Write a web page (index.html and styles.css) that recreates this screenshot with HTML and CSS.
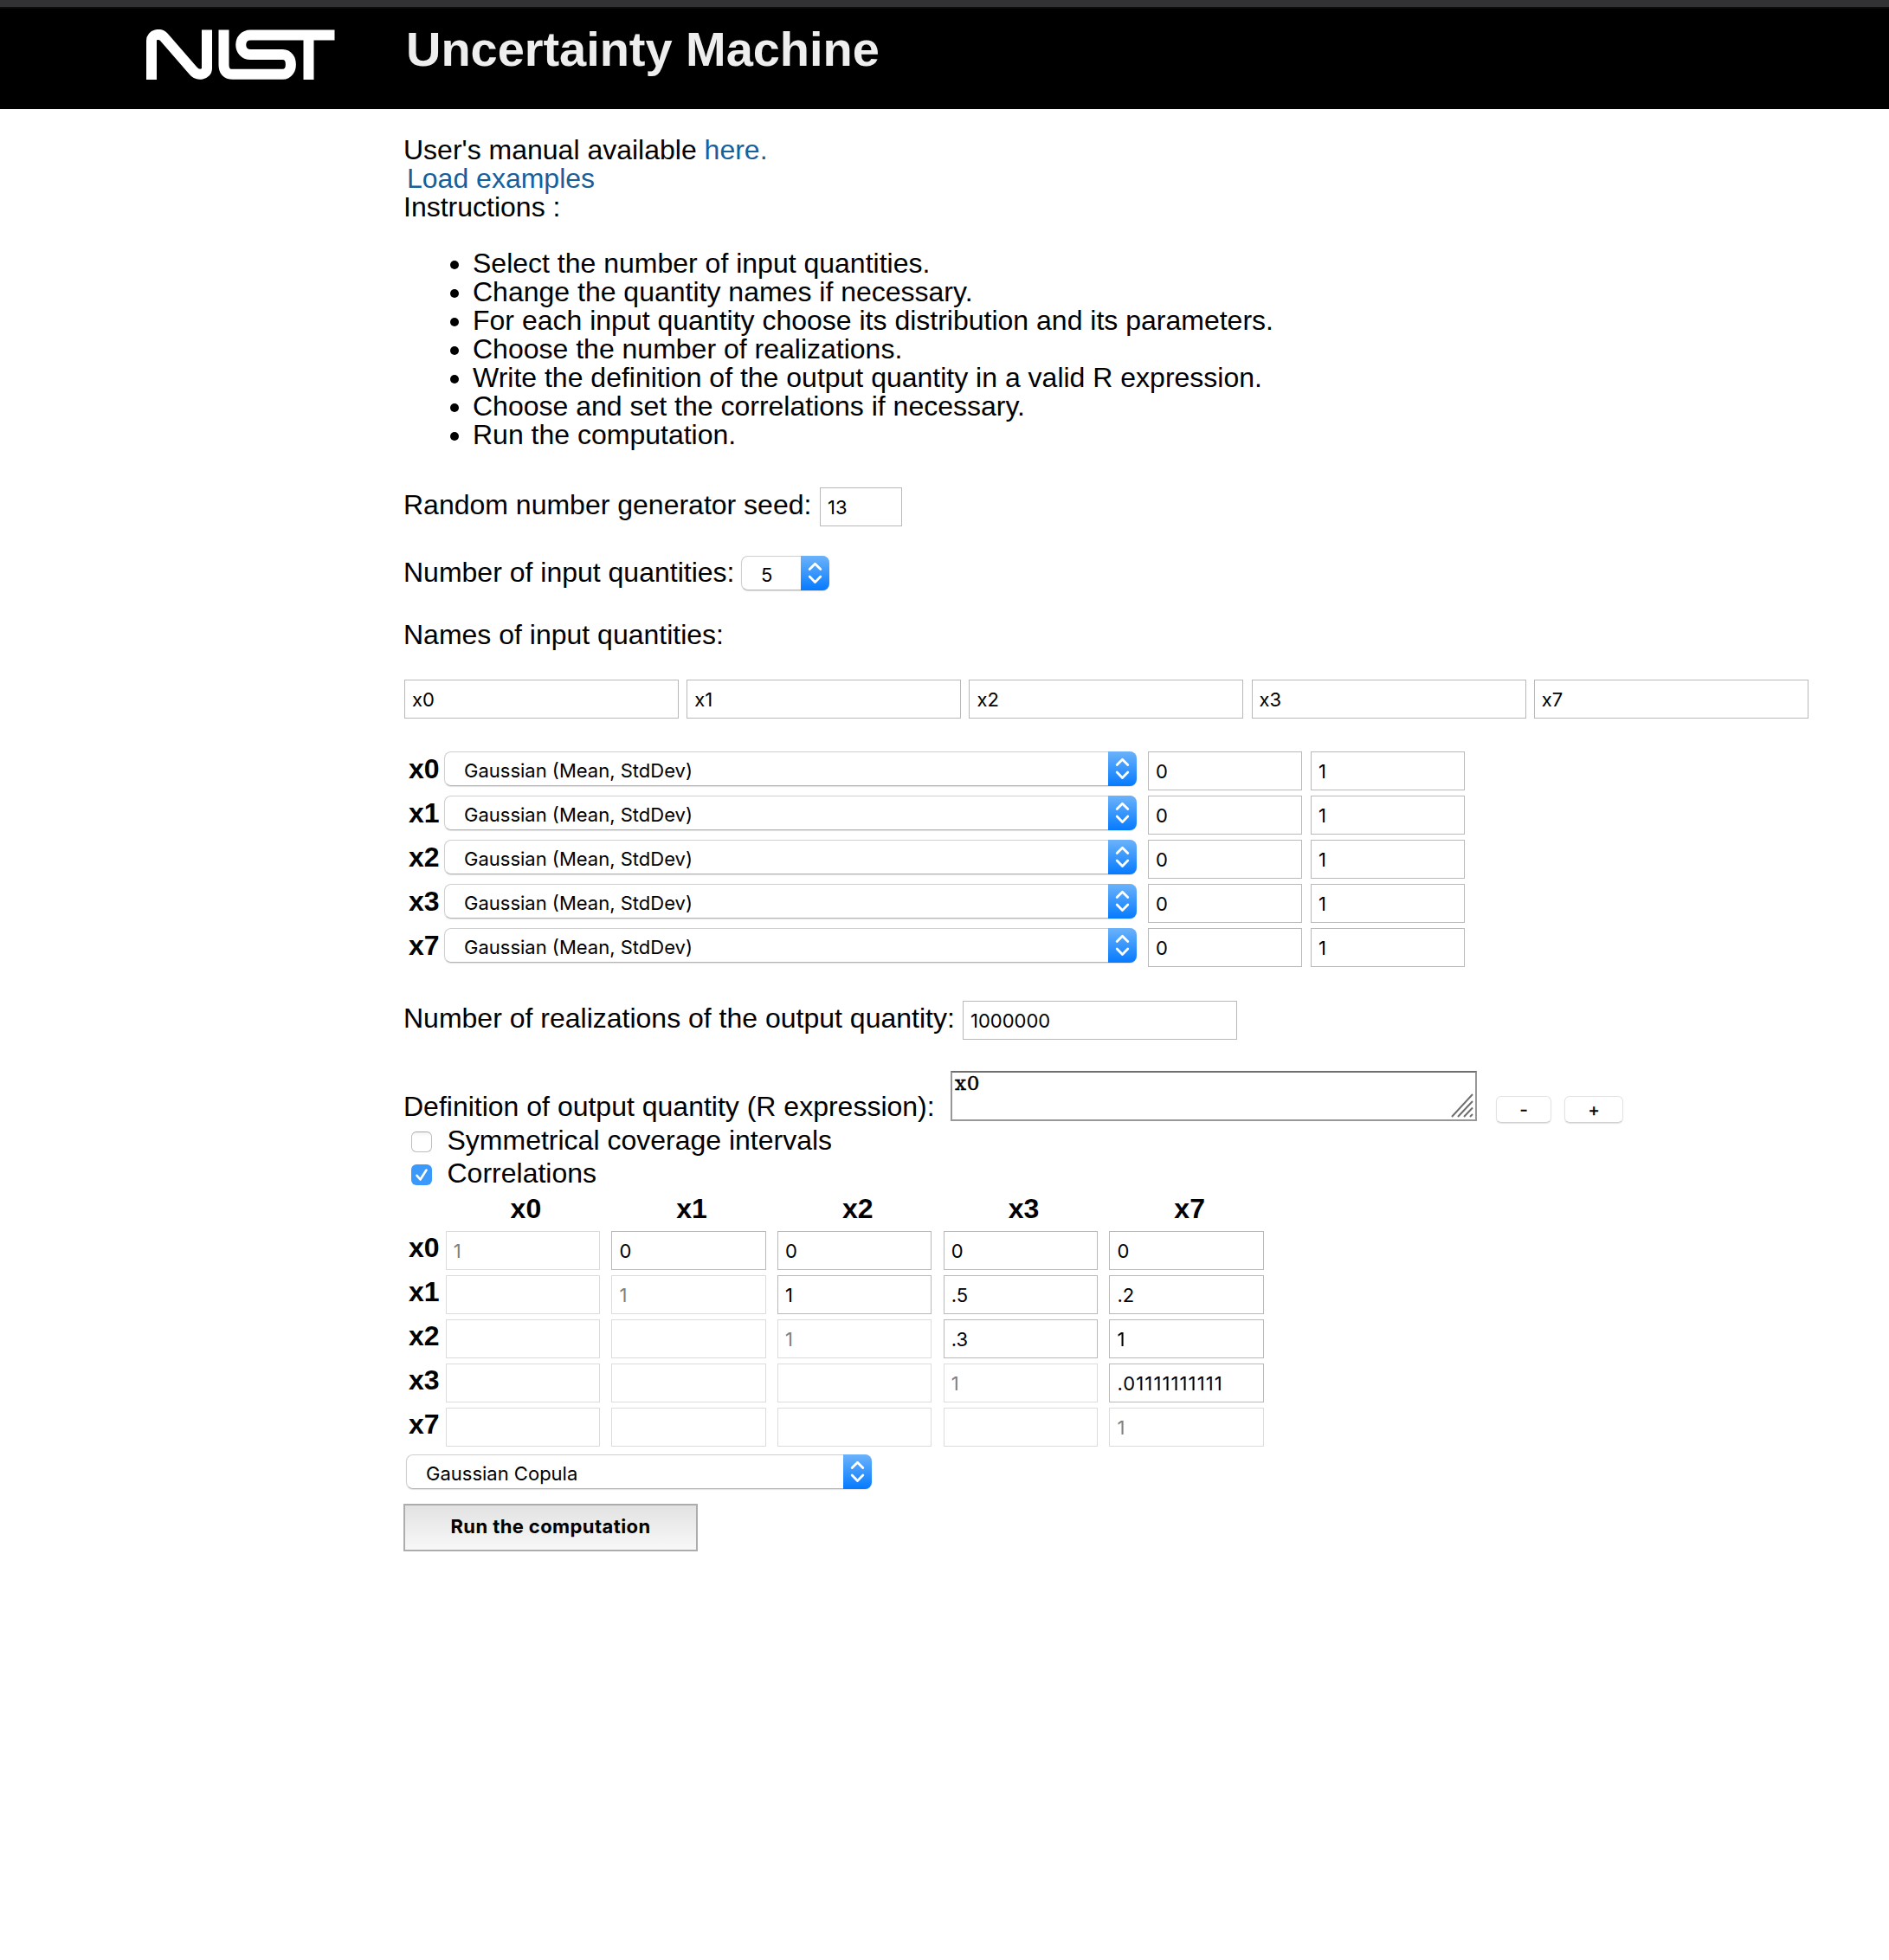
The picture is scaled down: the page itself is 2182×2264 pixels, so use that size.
FILE: index.html
```
<!DOCTYPE html>
<html lang="en">
<head>
<meta charset="utf-8">
<title>NIST Uncertainty Machine</title>
<link rel="stylesheet" href="styles.css">
</head>
<body>
<svg class="defs" width="0" height="0" aria-hidden="true">
  <symbol id="updown" viewBox="0 0 33 40"><path d="M10.2 15.600L16.5 9.200L22.8 15.600M10.2 24L16.5 30.400L22.8 24" fill="none" stroke="#fff" stroke-width="2.8" stroke-linecap="round" stroke-linejoin="round"/></symbol>
</svg>
<header class="top">
  <svg class="logo" viewBox="0 0 218 58" role="img" aria-label="NIST">
    <g fill="none" stroke="#fff" stroke-width="12">
      <path d="M6 58V13C6 6 15.500 3.500 20.500 9L54 47.500C59.500 54.500 70 52 70 45V.5"/>
      <path d="M89.500 .5V41Q89.500 51.800 100 51.800H157.500C170 51.800 170 29 157.500 29H120.500C105.500 29 105.500 6.500 120.500 6.500H217.500"/>
      <path d="M187.500 6V58"/>
    </g>
  </svg>
  <h1 class="title">Uncertainty Machine</h1>
</header>
<main class="page">
  <div class="line">User's manual available <a class="link">here.</a></div>
  <div class="line"><a class="link load">Load examples</a></div>
  <div class="line">Instructions :</div>
  <ul class="steps">
    <li>Select the number of input quantities.</li>
    <li>Change the quantity names if necessary.</li>
    <li>For each input quantity choose its distribution and its parameters.</li>
    <li>Choose the number of realizations.</li>
    <li>Write the definition of the output quantity in a valid R expression.</li>
    <li>Choose and set the correlations if necessary.</li>
    <li>Run the computation.</li>
  </ul>

  <div class="row seed"><span class="label">Random number generator seed:</span><span class="field">13</span></div>
  <div class="row count"><span class="label">Number of input quantities:</span><span class="select"><span class="value">5</span><svg class="arrows"><use href="#updown"/></svg></span></div>
  <div class="line names-label">Names of input quantities:</div>
  <div class="names"><span class="field">x0</span><span class="field">x1</span><span class="field">x2</span><span class="field">x3</span><span class="field">x7</span></div>

  <div class="dists">
    <div class="dist"><b class="name">x0</b><span class="select"><span class="value">Gaussian (Mean, StdDev)</span><svg class="arrows"><use href="#updown"/></svg></span><span class="field">0</span><span class="field">1</span></div>
    <div class="dist"><b class="name">x1</b><span class="select"><span class="value">Gaussian (Mean, StdDev)</span><svg class="arrows"><use href="#updown"/></svg></span><span class="field">0</span><span class="field">1</span></div>
    <div class="dist"><b class="name">x2</b><span class="select"><span class="value">Gaussian (Mean, StdDev)</span><svg class="arrows"><use href="#updown"/></svg></span><span class="field">0</span><span class="field">1</span></div>
    <div class="dist"><b class="name">x3</b><span class="select"><span class="value">Gaussian (Mean, StdDev)</span><svg class="arrows"><use href="#updown"/></svg></span><span class="field">0</span><span class="field">1</span></div>
    <div class="dist"><b class="name">x7</b><span class="select"><span class="value">Gaussian (Mean, StdDev)</span><svg class="arrows"><use href="#updown"/></svg></span><span class="field">0</span><span class="field">1</span></div>
  </div>

  <div class="row realizations"><span class="label">Number of realizations of the output quantity:</span><span class="field">1000000</span></div>

  <div class="row definition">
    <span class="label">Definition of output quantity (R expression):</span>
    <span class="area">x0<svg class="grip" viewBox="0 0 26 28"><path d="M1 27L25 1M8 27L25 9M15 27L25 16.500M22 27L25 24" fill="none" stroke="#6e6e6e" stroke-width="2"/></svg></span>
    <span class="btn minus">-</span>
    <span class="btn plus">+</span>
  </div>

  <div class="check"><span class="box"></span><span class="check-text">Symmetrical coverage intervals</span></div>
  <div class="check"><span class="box on"><svg viewBox="0 0 24 24"><path d="M6.500 12.800L10.500 17.500L17.500 6.500" fill="none" stroke="#fff" stroke-width="2.600" stroke-linecap="round" stroke-linejoin="round"/></svg></span><span class="check-text">Correlations</span></div>

  <div class="matrix">
    <span></span><b class="col">x0</b><b class="col">x1</b><b class="col">x2</b><b class="col">x3</b><b class="col">x7</b>
    <b class="name">x0</b><span class="field off">1</span><span class="field">0</span><span class="field">0</span><span class="field">0</span><span class="field">0</span>
    <b class="name">x1</b><span class="field off"></span><span class="field off">1</span><span class="field">1</span><span class="field">.5</span><span class="field">.2</span>
    <b class="name">x2</b><span class="field off"></span><span class="field off"></span><span class="field off">1</span><span class="field">.3</span><span class="field">1</span>
    <b class="name">x3</b><span class="field off"></span><span class="field off"></span><span class="field off"></span><span class="field off">1</span><span class="field long">.01111111111</span>
    <b class="name">x7</b><span class="field off"></span><span class="field off"></span><span class="field off"></span><span class="field off"></span><span class="field off">1</span>
  </div>

  <div class="select copula"><span class="value">Gaussian Copula</span><svg class="arrows"><use href="#updown"/></svg></div>
  <div class="run">Run the computation</div>
</main>
</body>
</html>
```
FILE: styles.css
```
* { box-sizing: border-box; }
body {
  margin: 0;
  background: #fff;
  color: #000;
  font-family: "Liberation Sans", Arial, sans-serif;
  font-size: 32px;
  line-height: 33px;
  white-space: nowrap;
}
.defs { display: none; }

.top {
  height: 126px;
  border-top: 8px solid #323234;
  background: linear-gradient(#0c0c0c 2px, #000 2px);
  display: flex;
  align-items: flex-start;
}
.logo { width: 218px; height: 58px; margin: 26px 0 0 169px; }
.title {
  margin: 17px 0 0 82px;
  font-size: 56px;
  line-height: 64px;
  font-weight: bold;
  letter-spacing: -.05px;
  color: #eee;
}

.page { padding: 31px 0 0 466px; }
.line { height: 33px; }
.link { color: #16609c; }
.load { margin-left: 4px; }
.steps { margin: 32px 0 0; padding: 0 0 0 80px; }

.row { display: flex; align-items: flex-start; }
.label { padding-top: 4px; flex: none; }

.field {
  display: block;
  height: 45px;
  border: 1px solid #b9b9b9;
  padding: 0 0 0 8px;
  background: #fff;
  font: 22px/44px Inter, sans-serif;
}
.off { border-color: #dcdcdc; color: #808080; }
.long { letter-spacing: 1.1px; }

.select {
  display: flex;
  justify-content: space-between;
  height: 40px;
  border: 1px solid #cfcfcf;
  border-bottom-color: #b4b4b4;
  border-right: 0;
  border-radius: 8px;
  box-shadow: 0 1px 1px rgba(0, 0, 0, .12);
  font: 22px/42px Inter, sans-serif;
}
.value { padding-left: 22px; }
.arrows {
  width: 33px;
  height: 40px;
  margin-top: -1px;
  border-radius: 0 8px 8px 0;
  background: linear-gradient(#6cb3fa, #057aff);
}

.seed { margin-top: 44px; height: 45px; }
.seed .label { width: 481px; }
.seed .field { width: 95px; }
.count { margin-top: 34px; height: 40px; }
.count .label { width: 390px; padding-top: 3px; }
.count .select { width: 102px; }

.names-label { margin-top: 35px; }
.names {
  margin: 35px 0 0 1px;
  display: grid;
  grid-template-columns: repeat(5, 317px);
  column-gap: 9.2px;
}

.dists { margin-top: 38px; display: grid; gap: 6px; }
.dist { display: flex; height: 45px; }
.name { padding: 4px 0 0 6px; }
.dist .name { width: 47px; }
.dist .select { width: 800px; margin-right: 13px; }
.dist .field { width: 178px; margin-right: 10px; }

.realizations { margin-top: 39px; }
.realizations .label { width: 646px; }
.realizations .field { width: 317px; }

.definition { margin-top: 36px; height: 58px; }
.definition .label { width: 632px; padding-top: 25px; }
.area {
  position: relative;
  width: 608px;
  height: 58px;
  border: 2px solid #989898;
  border-top-color: #6f6f6f;
  padding-left: 3px;
  font: 23px/24px "DejaVu Serif", serif;
  letter-spacing: .8px;
  -webkit-text-stroke: .5px #000;
}
.grip { position: absolute; right: 2px; bottom: 2px; width: 26px; height: 28px; }
.btn {
  margin-top: 29px;
  height: 31px;
  border: 1px solid #e2e2e2;
  border-bottom-color: #d0d0d0;
  border-radius: 6px;
  box-shadow: 0 1px 1px rgba(0, 0, 0, .12);
  font: 20px/30px Inter, sans-serif;
  text-align: center;
  -webkit-text-stroke: .4px #000;
}
.minus { width: 64px; margin-left: 22px; }
.plus { width: 68px; margin-left: 15px; }

.check { height: 38px; padding-left: 9px; display: flex; line-height: 38px; }
.check-text { padding-top: 3px; }
.box {
  width: 24px;
  height: 24px;
  margin: 12px 17.5px 0 0;
  border: 1px solid #bdbdbd;
  border-top-color: #a8a8a8;
  border-radius: 6px;
  background: linear-gradient(#f4f4f4, #fff 5px);
}
.on { border: 0; background: #3b99fc; }
.on svg { display: block; }

.matrix {
  display: grid;
  grid-template-columns: 35.4px repeat(5, 178.4px);
  column-gap: 13.3px;
  row-gap: 6px;
  margin-top: 6px;
}
.matrix .name { padding-top: 3px; }
.col { text-align: center; height: 39px; padding: 3px 0 0 7px; }

.copula { width: 538px; margin: 9px 0 0 3px; }
.run {
  width: 340px;
  height: 55px;
  margin-top: 17px;
  border: 2px solid #adadad;
  background: linear-gradient(#e2e2e2, #f8f8f8);
  font: bold 22px/48px Inter, sans-serif;
  letter-spacing: .4px;
  text-align: center;
}
```
